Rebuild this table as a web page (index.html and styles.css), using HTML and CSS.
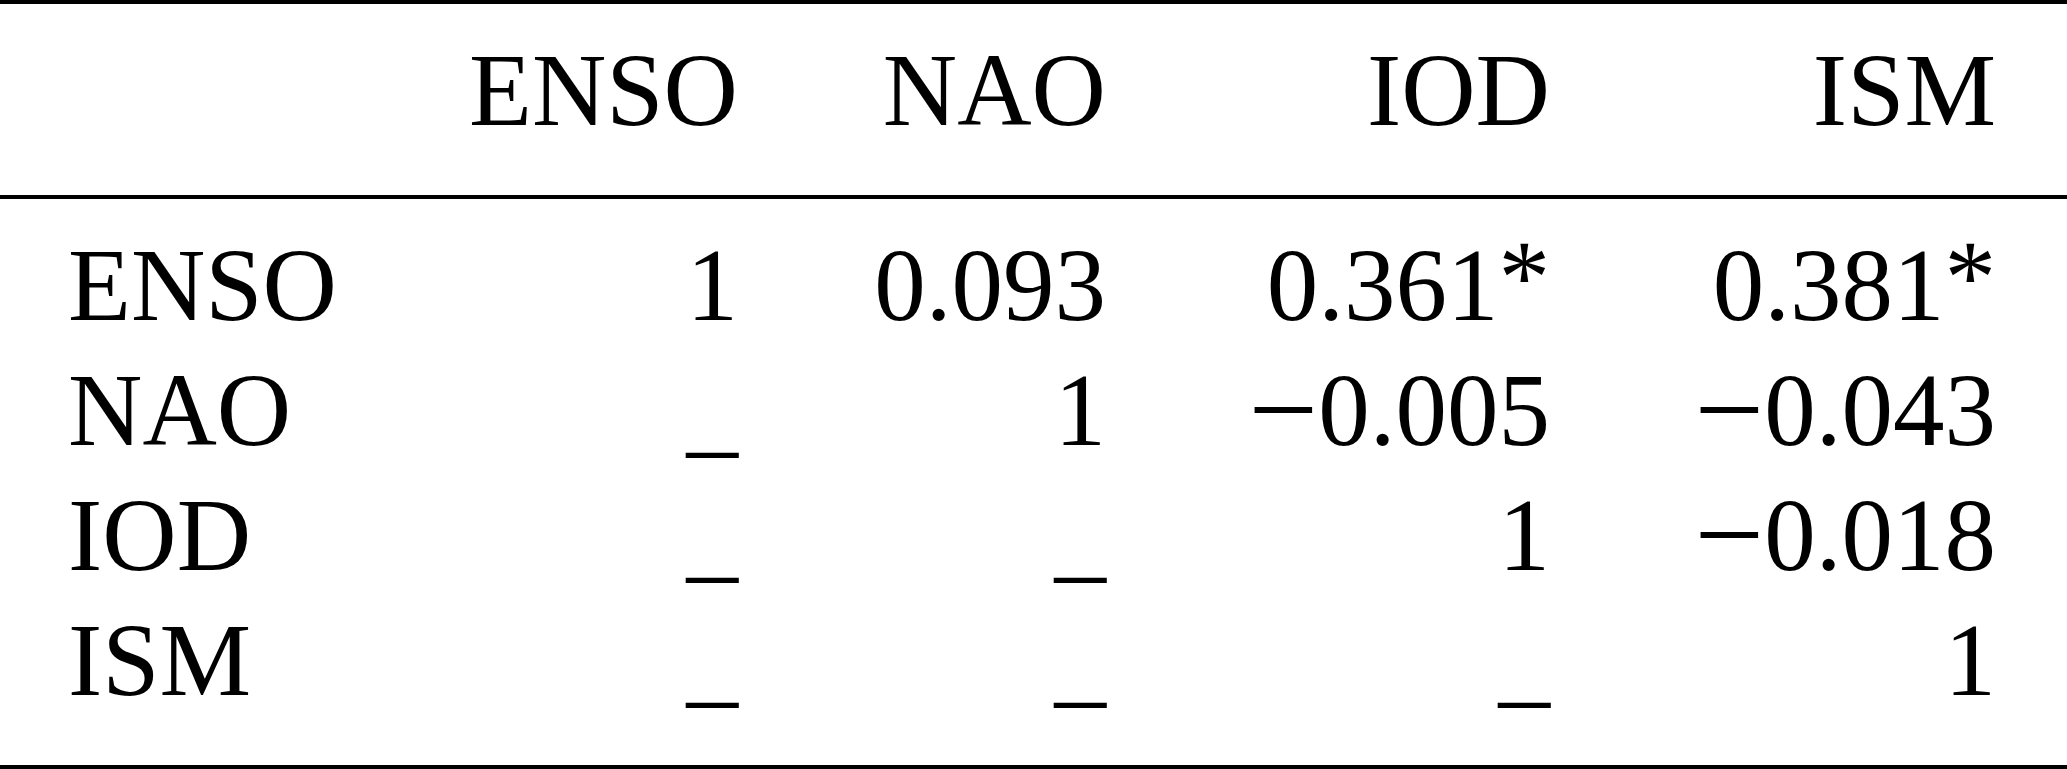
FILE: index.html
```html
<!DOCTYPE html>
<html lang="en">
<head>
  <meta charset="utf-8">
  <title>Correlation table</title>
  <link rel="stylesheet" href="styles.css">
</head>
<body>

  <table class="corrTable">
    <colgroup>
      <col class="colLabel">
      <col class="colEnso">
      <col class="colNao">
      <col class="colIod">
      <col class="colIsm">
    </colgroup>
    <thead>
      <tr>
        <th class="label"></th>
        <th>ENSO</th>
        <th>NAO</th>
        <th>IOD</th>
        <th class="last">ISM</th>
      </tr>
    </thead>
    <tbody>
      <tr class="firstRow">
        <td class="label">ENSO</td>
        <td>1</td>
        <td>0.093</td>
        <td>0.361<span class="sig">*</span></td>
        <td class="last">0.381<span class="sig">*</span></td>
      </tr>
      <tr>
        <td class="label">NAO</td>
        <td>_</td>
        <td>1</td>
        <td><span class="minus">&minus;</span>0.005</td>
        <td class="last"><span class="minus">&minus;</span>0.043</td>
      </tr>
      <tr>
        <td class="label">IOD</td>
        <td>_</td>
        <td>_</td>
        <td>1</td>
        <td class="last"><span class="minus">&minus;</span>0.018</td>
      </tr>
      <tr class="lastRow">
        <td class="label">ISM</td>
        <td>_</td>
        <td>_</td>
        <td>_</td>
        <td class="last">1</td>
      </tr>
    </tbody>
  </table>

</body>
</html>
```

FILE: styles.css
```css
body {
  margin: 0;
  background: white;
  color: black;
  font-family: "Liberation Serif", "Times New Roman", serif;
}

.corrTable {
  width: 100%;
  table-layout: fixed;
  border-collapse: separate;
  border-spacing: 0;
  font-size: 103px;
  line-height: 125px;
}

.colLabel { width: 400px; }
.colEnso  { width: 338px; }
.colNao   { width: 368px; }
.colIod   { width: 444px; }
.colIsm   { width: 517px; }

.corrTable th, .corrTable td {
  padding: 0;
  text-align: right;
  font-weight: normal;
  white-space: nowrap;
}

.corrTable th {
  border-top: 4px solid black;
  border-bottom: 4px solid black;
  padding-top: 24px;
  padding-bottom: 42px;
}

.corrTable .label {
  text-align: left;
  padding-left: 68px;
}

.corrTable .last {
  padding-right: 71px;
}

.firstRow td {
  padding-top: 24px;
}

.lastRow td {
  padding-bottom: 42px;
  border-bottom: 4px solid black;
}

/* significance mark sits a bit above the digits */
.sig {
  vertical-align: 8px;
  line-height: 0;
}

/* math minus is wider than the text one */
.minus {
  font-size: 1.2em;
  vertical-align: -6px;
  line-height: 0;
}
```
